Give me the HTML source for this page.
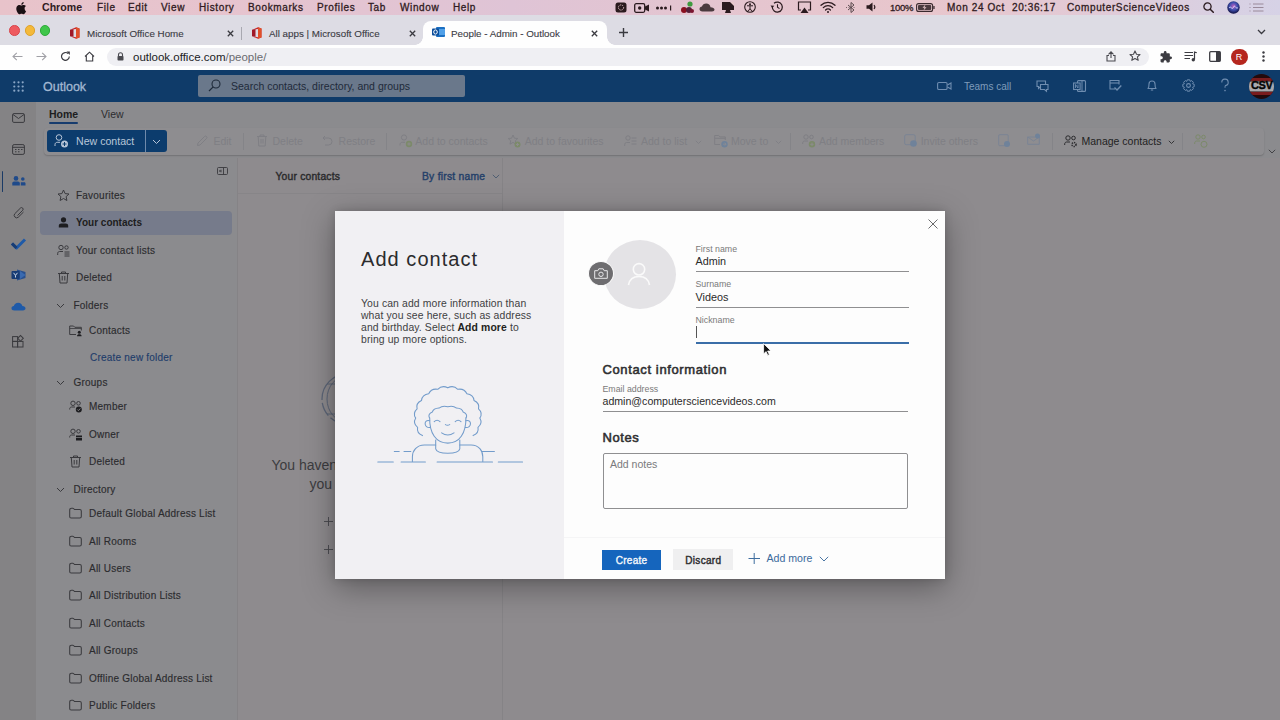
<!DOCTYPE html>
<html><head><meta charset="utf-8">
<style>
*{box-sizing:border-box;margin:0;padding:0}
html,body{width:1280px;height:720px;overflow:hidden;background:#8e8b8e;font-family:"Liberation Sans",sans-serif;}
.a{position:absolute;white-space:nowrap}
svg{position:absolute;overflow:visible}
/* mac menu bar */
#menubar{position:absolute;left:0;top:0;width:1280px;height:16px;background:linear-gradient(90deg,#e8c3ca 0%,#e6c4cf 20%,#dfc4d6 40%,#e4c5d0 55%,#e8c6cc 72%,#e2cad6 85%,#d9d0e2 95%,#d6d2e6 100%);border-bottom:1px solid #b49aa6;}
#menubar .a{top:0.8px;font-size:10px;line-height:13px;color:#301b22;letter-spacing:0.62px;-webkit-text-stroke:0.3px #301b22}
/* tab strip */
#tabs{position:absolute;left:0;top:15px;width:1280px;height:30px;background:#dddce4}
#tabs .t{font-size:9.8px;line-height:12px;color:#3a3a42;top:12.8px;-webkit-text-stroke:0.1px}
#toolbar{position:absolute;left:0;top:45px;width:1280px;height:25px;background:#fefefe}
#omni{position:absolute;left:107px;top:47.8px;width:1042px;height:18.6px;border-radius:10px;background:#efeff3}
/* outlook */
#hdr{position:absolute;left:0;top:70px;width:1280px;height:32px;background:#0f3b69}
#rail{position:absolute;left:0;top:102px;width:36px;height:618px;background:#848385}
#app{position:absolute;left:36px;top:102px;width:1244px;height:618px;background:#8b8b8e}
#listpane{position:absolute;left:237px;top:158px;width:266px;height:562px;background:#8e8b8e;border-left:1px solid #858386;border-right:1px solid #858386}
#right{position:absolute;left:503px;top:158px;width:777px;height:562px;background:#8e8b8e}
.nav{font-size:10px;color:#2b2b2e;line-height:13px;letter-spacing:0.22px;-webkit-text-stroke:0.15px}
/* modal */
#modal{position:absolute;left:335px;top:211px;width:610px;height:368px;background:#fdfdfd;box-shadow:0 8px 30px rgba(0,0,0,0.35),0 0 8px rgba(0,0,0,0.15)}
#mleft{position:absolute;left:0;top:0;width:229px;height:368px;background:#f1f0f3}
.lbl{font-size:8.8px;color:#7a7a7a;line-height:10px}
.val{font-size:10.8px;color:#2b2b2b;line-height:13px}
</style></head>
<body>
<!-- MENU BAR -->
<div id="menubar">
  <div class="a" style="left:42px;top:1.2px;font-weight:bold;font-size:10.6px;letter-spacing:0;-webkit-text-stroke:0">Chrome</div>
  <div class="a" style="left:97px">File</div>
  <div class="a" style="left:128px">Edit</div>
  <div class="a" style="left:161px">View</div>
  <div class="a" style="left:199px">History</div>
  <div class="a" style="left:248px">Bookmarks</div>
  <div class="a" style="left:317px">Profiles</div>
  <div class="a" style="left:368px">Tab</div>
  <div class="a" style="left:400px">Window</div>
  <div class="a" style="left:453px">Help</div>
  <!-- apple -->
  <svg style="left:16px;top:2px" width="11" height="12" viewBox="0 0 11 12"><path d="M8.6 6.4c0-1.5 1.2-2.2 1.3-2.3-.7-1-1.8-1.2-2.2-1.2-.9-.1-1.8.6-2.3.6-.5 0-1.2-.5-2-.5C2.3 3 1.3 3.6.8 4.6c-1.1 1.9-.3 4.7.8 6.2.5.7 1.1 1.6 1.9 1.5.8 0 1-.5 2-.5s1.2.5 2 .5c.8 0 1.3-.8 1.8-1.5.6-.8.8-1.6.8-1.7 0 0-1.5-.6-1.5-2.7zM7.1 1.9C7.5 1.4 7.8.7 7.7 0c-.6 0-1.3.4-1.8.9-.4.4-.7 1.1-.6 1.8.7.1 1.4-.3 1.8-.8z" fill="#1a1014"/></svg>
  <!-- status icons -->
  <svg style="left:615px;top:2px" width="12" height="11"><rect x="0.5" y="0.5" width="11" height="10" rx="2.5" fill="#2a1a1e"/><circle cx="6" cy="5.5" r="2.6" fill="none" stroke="#e8c8cc" stroke-width="1" stroke-dasharray="1.2 1"/></svg>
  <svg style="left:634px;top:3px" width="16" height="10"><rect x="0.7" y="0.7" width="10" height="8.6" rx="1.5" fill="none" stroke="#2a1a1e" stroke-width="1.3"/><circle cx="5.7" cy="5" r="1.7" fill="#2a1a1e"/><path d="M11 3.5L15 1.5V8.5L11 6.5Z" fill="#2a1a1e"/></svg>
  <svg style="left:656px;top:5px" width="17" height="6"><circle cx="1.5" cy="3" r="1.5" fill="#2a1a1e"/><circle cx="5.5" cy="3" r="1.5" fill="#2a1a1e"/><circle cx="9.5" cy="3" r="1.5" fill="#2a1a1e"/><rect x="14" y="0.5" width="1.2" height="5" fill="#2a1a1e"/></svg>
  <svg style="left:680px;top:1px" width="15" height="13"><circle cx="10" cy="3" r="2.6" fill="#3f9a3f"/><circle cx="4" cy="9" r="3" fill="#8a1020"/><circle cx="9" cy="9" r="3" fill="#55203a"/><circle cx="12" cy="10" r="2" fill="#7a1530"/></svg>
  <svg style="left:699px;top:3px" width="16" height="9"><path d="M3.5 8.5C1.5 8.5 0.5 7.3 0.5 6 0.5 4.6 1.6 3.6 3 3.6 3.5 1.7 5 0.5 7.2 0.5 9.6 0.5 11.3 2.2 11.5 4.2 13.7 4.2 15.5 5.3 15.5 6.5 15.5 7.7 14.5 8.5 13 8.5Z" fill="#4a3a3e"/></svg>
  <svg style="left:721px;top:1px" width="14" height="13"><path d="M1 1H13V9H1Z" fill="#2a1a1e"/><path d="M5 9L4 12H10L9 9" fill="#2a1a1e"/><path d="M9 1L13 1 13 5" fill="#e8c8cc"/></svg>
  <svg style="left:744px;top:1px" width="12" height="12"><circle cx="6" cy="6" r="5.3" fill="none" stroke="#2a1a1e" stroke-width="1.1"/><circle cx="6" cy="3.3" r="1" fill="#2a1a1e"/><path d="M3 4.8H9M6 4.8V7.5L4.3 10M6 7.5L7.7 10" stroke="#2a1a1e" stroke-width="1" fill="none"/></svg>
  <svg style="left:770px;top:1px" width="14" height="12"><path d="M2.3 6A5 5 0 1 0 4 2.3" fill="none" stroke="#2a1a1e" stroke-width="1.2"/><path d="M0.5 4.5L2.3 7 4.3 4.8" fill="#2a1a1e"/><path d="M7.5 3.2V6.3L9.5 7.6" stroke="#2a1a1e" stroke-width="1.1" fill="none"/></svg>
  <svg style="left:797px;top:1px" width="15" height="12"><path d="M4 9H1.5V1H13.5V9H11" fill="none" stroke="#2a1a1e" stroke-width="1.2"/><path d="M3.5 12L7.5 6.5 11.5 12Z" fill="#2a1a1e"/></svg>
  <svg style="left:820px;top:1px" width="16" height="12"><path d="M1 4.2A10 10 0 0 1 15 4.2M3.3 6.6A6.6 6.6 0 0 1 12.7 6.6M5.6 9A3.3 3.3 0 0 1 10.4 9" fill="none" stroke="#2a1a1e" stroke-width="1.3" stroke-linecap="round"/><circle cx="8" cy="11" r="1" fill="#2a1a1e"/></svg>
  <svg style="left:846px;top:2px" width="10" height="11"><path d="M2 3L8 8 5 10.5V0.5L8 3 2 8" fill="none" stroke="#5a4a4e" stroke-width="1"/><path d="M0 5.5H10" stroke="#5a4a4e" stroke-width="0.8" stroke-dasharray="1 1.5"/></svg>
  <svg style="left:866px;top:2px" width="11" height="10"><path d="M0.5 3.3H3L6.5 0.5V9.5L3 6.7H0.5Z" fill="#2a1a1e"/><path d="M8 3A3 3 0 0 1 8 7" fill="none" stroke="#2a1a1e" stroke-width="1.1"/></svg>
  <div class="a" style="left:890px;font-size:9.5px;letter-spacing:-0.3px">100%</div>
  <svg style="left:916px;top:3px" width="19" height="9"><rect x="0.6" y="0.6" width="16" height="7.8" rx="2" fill="none" stroke="#3a2a2e" stroke-width="1.1"/><rect x="2" y="2" width="13.2" height="5" rx="1" fill="#4a3a3e"/><path d="M9.5 1.5L6.5 4.8H8.5L7.5 7.5 10.5 4.2H8.5Z" fill="#e8c8cc"/><rect x="17.3" y="3" width="1.3" height="3" fill="#3a2a2e"/></svg>
  <div class="a" style="left:947px">Mon 24 Oct</div>
  <div class="a" style="left:1012px">20:36:17</div>
  <div class="a" style="left:1067px">ComputerScienceVideos</div>
  <svg style="left:1203px;top:2px" width="11" height="11"><circle cx="4.5" cy="4.5" r="3.6" fill="none" stroke="#2a1a1e" stroke-width="1.3"/><path d="M7.2 7.2L10.3 10.3" stroke="#2a1a1e" stroke-width="1.5" stroke-linecap="round"/></svg>
  <svg style="left:1227px;top:1px" width="13" height="13"><defs><radialGradient id="sg" cx="50%" cy="40%" r="60%"><stop offset="0" stop-color="#c060c0"/><stop offset="0.5" stop-color="#4050b0"/><stop offset="1" stop-color="#101040"/></radialGradient></defs><circle cx="6.5" cy="6.5" r="6.2" fill="url(#sg)"/><path d="M2 7C4 4 5 10 6.5 6 8 3 9 9 11 6.5" stroke="#e0e0ff" stroke-width="0.9" fill="none"/></svg>
  <svg style="left:1249px;top:3px" width="15" height="9"><g stroke="#9a8a9a" stroke-width="1"><path d="M0.5 1H1.5M4 1H14.5M0.5 4.5H1.5M4 4.5H14.5M0.5 8H1.5M4 8H14.5"/></g></svg>
</div>
<!-- TABS -->
<div id="tabs">
  <div class="t a" style="left:87px">Microsoft Office Home</div>
  <div class="t a" style="left:269px">All apps | Microsoft Office</div>
  <div style="position:absolute;left:423px;top:6px;width:184px;height:24px;background:#fefefe;border-radius:8px 8px 0 0"></div>
  <div style="position:absolute;left:415px;top:22px;width:8px;height:8px;background:radial-gradient(circle at 0 0,transparent 7.5px,#fefefe 8px)"></div>
  <div style="position:absolute;left:607px;top:22px;width:8px;height:8px;background:radial-gradient(circle at 100% 0,transparent 7.5px,#fefefe 8px)"></div>
  <div class="t a" style="left:451px">People - Admin - Outlook</div>
</div>
<!-- traffic lights -->
<div style="position:absolute;left:9px;top:25px;width:10.5px;height:10.5px;border-radius:50%;background:#ee5a5f;border:0.5px solid #d8474d"></div>
<div style="position:absolute;left:24.5px;top:25px;width:10.5px;height:10.5px;border-radius:50%;background:#f4b93a;border:0.5px solid #dea22c"></div>
<div style="position:absolute;left:39.5px;top:25px;width:10.5px;height:10.5px;border-radius:50%;background:#3fc64a;border:0.5px solid #2fab3a"></div>
<!-- office icons -->
<svg style="left:69px;top:27px" width="11" height="12" viewBox="0 0 11 12"><path d="M1 2.8L7 0.3 10.5 1.5V10.5L7 11.7 1 9.3 7 10.2V2Z" fill="#c8282c"/><path d="M1 2.8L4.5 2V9.8L1 9.3Z" fill="#a01828"/><path d="M7 0.3L10.5 1.5V10.5L7 11.7Z" fill="#e0502a"/></svg>
<svg style="left:251px;top:27px" width="11" height="12" viewBox="0 0 11 12"><path d="M1 2.8L7 0.3 10.5 1.5V10.5L7 11.7 1 9.3 7 10.2V2Z" fill="#c8282c"/><path d="M1 2.8L4.5 2V9.8L1 9.3Z" fill="#a01828"/><path d="M7 0.3L10.5 1.5V10.5L7 11.7Z" fill="#e0502a"/></svg>
<!-- outlook icon -->
<svg style="left:432px;top:26px" width="13" height="12" viewBox="0 0 13 12"><rect x="4" y="1" width="9" height="10" rx="1" fill="#1b6fc2"/><rect x="6" y="3" width="7" height="6" fill="#50a0e8"/><rect x="0" y="2.5" width="7" height="7" rx="1" fill="#0a4c9a"/><ellipse cx="3.5" cy="6" rx="1.8" ry="2.1" fill="none" stroke="#fff" stroke-width="1"/></svg>
<!-- tab close x -->
<svg style="left:227px;top:30px" width="7" height="7"><path d="M0.8 0.8L6.2 6.2M6.2 0.8L0.8 6.2" stroke="#3a3a40" stroke-width="1.3"/></svg>
<svg style="left:409px;top:30px" width="7" height="7"><path d="M0.8 0.8L6.2 6.2M6.2 0.8L0.8 6.2" stroke="#3a3a40" stroke-width="1.3"/></svg>
<svg style="left:591px;top:30px" width="7" height="7"><path d="M0.8 0.8L6.2 6.2M6.2 0.8L0.8 6.2" stroke="#3a3a40" stroke-width="1.3"/></svg>
<div style="position:absolute;left:241px;top:27px;width:1px;height:13px;background:#a8a8b0"></div>
<svg style="left:619px;top:28px" width="9" height="9"><path d="M4.5 0V9M0 4.5H9" stroke="#3a3a40" stroke-width="1.4"/></svg>
<svg style="left:1257px;top:29px" width="9" height="6"><path d="M1 1L4.5 4.5 8 1" stroke="#3a3a40" stroke-width="1.3" fill="none"/></svg>
<div id="toolbar"></div>
<div id="omni"></div>
<!-- nav buttons -->
<svg style="left:12px;top:52px" width="11" height="9"><path d="M10.5 4.5H1M4.8 0.8L1 4.5 4.8 8.2" stroke="#a0a0a6" stroke-width="1.1" fill="none"/></svg>
<svg style="left:36px;top:52px" width="11" height="9"><path d="M0.5 4.5H10M6.2 0.8L10 4.5 6.2 8.2" stroke="#a0a0a6" stroke-width="1.1" fill="none"/></svg>
<svg style="left:60px;top:51px" width="11" height="11"><path d="M9.3 5.5A3.9 3.9 0 1 1 8.2 2.7" stroke="#3c3c42" stroke-width="1.2" fill="none"/><path d="M6.5 0.6H9.8V3.9Z" fill="#3c3c42"/></svg>
<svg style="left:84px;top:51px" width="11" height="11"><path d="M1 5.5L5.5 1.2 10 5.5M2.3 4.3V10H8.7V4.3" stroke="#3c3c42" stroke-width="1.1" fill="none"/></svg>
<svg style="left:117px;top:52px" width="7" height="9"><path d="M1.5 4V2.8A2 2 0 0 1 5.5 2.8V4" stroke="#4a4a50" stroke-width="1.1" fill="none"/><rect x="0.5" y="4" width="6" height="4.6" rx="0.8" fill="#4a4a50"/></svg>
<!-- right toolbar icons -->
<svg style="left:1106px;top:51px" width="10" height="11"><path d="M5 1V7M2.5 3.3L5 0.8 7.5 3.3M3 4.5H1V10H9V4.5H7" stroke="#4a4a50" stroke-width="1.1" fill="none"/></svg>
<svg style="left:1129px;top:50px" width="12" height="12"><path d="M6 0.9L7.5 4.2 11 4.5 8.4 6.8 9.2 10.3 6 8.5 2.8 10.3 3.6 6.8 1 4.5 4.5 4.2Z" stroke="#4a4a50" stroke-width="1.1" fill="none" stroke-linejoin="round"/></svg>
<svg style="left:1160px;top:50.5px" width="12" height="12" viewBox="1 1 22 22"><path d="M20.5 11H19V7c0-1.1-.9-2-2-2h-4V3.5C13 2.120 11.88 1 10.5 1S8 2.12 8 3.5V5H4c-1.1 0-1.99.9-1.99 2v3.8H3.5c1.49 0 2.7 1.21 2.7 2.7s-1.21 2.7-2.7 2.7H2V20c0 1.1.9 2 2 2h3.8v-1.5c0-1.49 1.21-2.700 2.7-2.7 1.49 0 2.7 1.21 2.7 2.7V22H17c1.1 0 2-.9 2-2v-4h1.5c1.38 0 2.5-1.12 2.5-2.5S21.88 11 20.5 11z" fill="#3c3c42"/></svg>
<svg style="left:1184px;top:51px" width="13" height="11"><path d="M0.5 1.5H9M0.5 4.5H9M0.5 7.5H6" stroke="#3c3c42" stroke-width="1.2"/><path d="M10.5 8.5V1L12.8 1.8" stroke="#3c3c42" stroke-width="1.2" fill="none"/><circle cx="9.3" cy="8.8" r="1.7" fill="#3c3c42"/></svg>
<svg style="left:1209px;top:51px" width="12" height="11"><rect x="0.7" y="0.7" width="10.6" height="9.6" rx="1" fill="none" stroke="#3c3c42" stroke-width="1.3"/><rect x="7" y="0.7" width="4.3" height="9.6" fill="#3c3c42"/></svg>
<div style="position:absolute;left:1231px;top:48.5px;width:16.5px;height:16.5px;border-radius:50%;background:#b5261e"></div>
<div class="a" style="left:1234.5px;top:51.5px;font-size:9px;line-height:11px;color:#fff;width:9px;text-align:center">R</div>
<svg style="left:1262px;top:51px" width="3" height="11"><circle cx="1.5" cy="1.5" r="1.2" fill="#3c3c42"/><circle cx="1.5" cy="5.5" r="1.2" fill="#3c3c42"/><circle cx="1.5" cy="9.5" r="1.2" fill="#3c3c42"/></svg>
<div class="a" style="left:133px;top:50px;font-size:11.5px;line-height:14px;color:#202124">outlook.office.com<span style="color:#6b6b70">/people/</span></div>

<!-- OUTLOOK HEADER -->
<div id="hdr">
  <div class="a" style="left:43px;top:10px;font-size:12.5px;line-height:15px;color:#a3b8d2;-webkit-text-stroke:0.3px #a3b8d2">Outlook</div>
  <div style="position:absolute;left:198px;top:5px;width:267px;height:22px;background:#6a788b;border-radius:2px"></div>
  <div class="a" style="left:231px;top:10px;font-size:10.5px;line-height:13px;color:#1e2a3a">Search contacts, directory, and groups</div>
  <div class="a" style="left:964px;top:10px;font-size:10px;line-height:13px;color:#7f9bbb">Teams call</div>
  <!-- waffle -->
  <svg style="left:13px;top:11px" width="11" height="11"><g fill="#8aa6c6"><circle cx="1.3" cy="1.3" r="1.1"/><circle cx="5.5" cy="1.3" r="1.1"/><circle cx="9.7" cy="1.3" r="1.1"/><circle cx="1.3" cy="5.5" r="1.1"/><circle cx="5.5" cy="5.5" r="1.1"/><circle cx="9.7" cy="5.5" r="1.1"/><circle cx="1.3" cy="9.7" r="1.1"/><circle cx="5.5" cy="9.7" r="1.1"/><circle cx="9.7" cy="9.7" r="1.1"/></g></svg>
  <!-- search icon -->
  <svg style="left:208px;top:9px" width="13" height="13"><circle cx="8" cy="5" r="4" fill="none" stroke="#1e2a3a" stroke-width="1.1"/><path d="M5.2 7.8L1 12" stroke="#1e2a3a" stroke-width="1.2"/></svg>
  <!-- header right icons -->
  <svg style="left:937px;top:11px" width="15" height="10"><rect x="0.6" y="1.5" width="9.5" height="7" rx="1.3" fill="none" stroke="#6f8db0" stroke-width="1.1"/><path d="M10.5 4L14 2V8L10.5 6" fill="none" stroke="#6f8db0" stroke-width="1.1"/></svg>
  <svg style="left:1036px;top:10px" width="13" height="12"><path d="M1 1H9.5V6.5H4.5L2.5 8.5V6.5H1Z" fill="none" stroke="#6f8db0" stroke-width="1.1"/><path d="M4.5 4.5H12V9.5H10.5V11.3L8.5 9.5H4.5Z" fill="#0f3b69" stroke="#6f8db0" stroke-width="1.1"/></svg>
  <svg style="left:1073px;top:10px" width="13" height="12"><rect x="4.5" y="0.6" width="8" height="10.8" rx="1" fill="none" stroke="#6f8db0" stroke-width="1.1"/><path d="M9 1V11" stroke="#6f8db0" stroke-width="1"/><rect x="0.6" y="3" width="6.5" height="6.5" fill="#0f3b69" stroke="#6f8db0" stroke-width="1.1"/><path d="M2.5 8V4.5L5 8V4.5" stroke="#6f8db0" stroke-width="0.9" fill="none"/></svg>
  <svg style="left:1109px;top:9px" width="13" height="13"><path d="M6 10H1V1.5H10V5.5" fill="none" stroke="#6f8db0" stroke-width="1.1"/><path d="M1 4H10" stroke="#6f8db0" stroke-width="1.1"/><path d="M5.5 8.5L8 11 12.3 6.5" fill="none" stroke="#6f8db0" stroke-width="1.4"/></svg>
  <svg style="left:1147px;top:9px" width="10" height="13"><path d="M1 9.5C2 8.5 2 7.5 2 5A3 3 0 0 1 8 5C8 7.5 8 8.5 9 9.5Z" fill="none" stroke="#6f8db0" stroke-width="1.1" stroke-linejoin="round"/><path d="M3.8 11H6.2" stroke="#6f8db0" stroke-width="1.1"/></svg>
  <svg style="left:1182px;top:9px" width="13" height="13"><circle cx="6.5" cy="6.5" r="1.9" fill="none" stroke="#6f8db0" stroke-width="1.1"/><path d="M5.3 0.8H7.7L8.2 2.4 9.7 1.6 11.4 3.3 10.6 4.8 12.2 5.3V7.7L10.6 8.2 11.4 9.7 9.7 11.4 8.2 10.6 7.7 12.2H5.3L4.8 10.6 3.3 11.4 1.6 9.7 2.4 8.2 0.8 7.7V5.3L2.4 4.8 1.6 3.3 3.3 1.6 4.8 2.4Z" fill="none" stroke="#6f8db0" stroke-width="1" stroke-linejoin="round"/></svg>
  <svg style="left:1221px;top:9px" width="8" height="13"><path d="M0.8 3.5A3.2 3.2 0 1 1 4.5 6.5C4 6.8 4 7.5 4 8.8" fill="none" stroke="#6f8db0" stroke-width="1.1"/><circle cx="4" cy="11.6" r="0.8" fill="#6f8db0"/></svg>
  <!-- CSV avatar -->
  <svg style="left:1249px;top:4px" width="25" height="25" viewBox="0 0 25 25"><defs><clipPath id="cc"><circle cx="12.5" cy="12.5" r="12.5"/></clipPath></defs><g clip-path="url(#cc)"><rect width="25" height="25" fill="#240a0c"/><rect y="4" width="25" height="3" fill="#7a1c1e"/><rect y="7.5" width="25" height="10" fill="#a9a8ac"/><rect y="18" width="25" height="3" fill="#7a1c1e"/></g></svg>
  <div class="a" style="left:1251px;top:9px;font-size:11px;line-height:13px;font-weight:bold;color:#050505;letter-spacing:-0.4px;-webkit-text-stroke:0.4px #050505">CSV</div>
</div>
<div id="rail"></div>
<div id="app"></div>
<div id="listpane"></div>
<div id="right"></div>
<!-- RIBBON -->
<div style="position:absolute;left:44px;top:128px;width:1220px;height:27px;border-radius:4px;background:#8e8d90;box-shadow:0 1px 1.5px rgba(0,0,0,0.18)"></div>
<div class="a" style="left:49px;top:108px;font-size:10.5px;line-height:13px;font-weight:bold;color:#1d1d20">Home</div>
<div style="position:absolute;left:49px;top:122px;width:29px;height:2px;background:#173c6e;border-radius:1px"></div>
<div class="a" style="left:101px;top:108px;font-size:10.5px;line-height:13px;color:#2b2b2e">View</div>
<div style="position:absolute;left:47px;top:130px;width:120px;height:22px;background:#0c3c6d;border-radius:3px"></div>
<div style="position:absolute;left:145px;top:130px;width:1px;height:22px;background:#6f8aab"></div>
<svg style="left:54px;top:134px" width="15" height="14"><circle cx="5" cy="3.5" r="2.8" fill="none" stroke="#b8c6d8" stroke-width="1"/><path d="M1 12V10.5C1 9.3 2 8.3 3.2 8.3H6" fill="none" stroke="#b8c6d8" stroke-width="1"/><circle cx="10.5" cy="10" r="3.5" fill="#b8c6d8"/><path d="M10.5 8V12M8.5 10H12.5" stroke="#0c3c6d" stroke-width="1"/></svg>
<div class="a" style="left:76px;top:135px;font-size:10.6px;line-height:13px;color:#b8c6d8">New contact</div>
<svg style="left:152px;top:139px" width="9" height="6"><path d="M1 1L4.5 4.5 8 1" fill="none" stroke="#b8c6d8" stroke-width="1"/></svg>
<svg style="left:196px;top:135px" width="12" height="12"><path d="M1.5 10.5L2 8 8.5 1.5A1.4 1.4 0 0 1 10.5 3.5L4 10Z" fill="none" stroke="#7f7f84" stroke-width="1"/></svg>
<div class="a" style="left:213.4px;top:135px;font-size:10.5px;line-height:13px;color:#7f7f84">Edit</div>
<div style="position:absolute;left:243px;top:133px;width:1px;height:17px;background:#848488"></div>
<svg style="left:256px;top:134px" width="12" height="13"><path d="M1 2.5H11M4 2.5V1H8V2.5M2.2 2.5L2.8 12H9.2L9.8 2.5M5 5V9.5M7 5V9.5" fill="none" stroke="#7f7f84" stroke-width="1"/></svg>
<div class="a" style="left:272.5px;top:135px;font-size:10.5px;line-height:13px;color:#7f7f84">Delete</div>
<svg style="left:322px;top:135px" width="11" height="11"><path d="M3 1L1 3 3 5M1 3H6.5A3.5 3.5 0 0 1 6.5 10H3" fill="none" stroke="#7f7f84" stroke-width="1"/></svg>
<div class="a" style="left:338.6px;top:135px;font-size:10.5px;line-height:13px;color:#7f7f84">Restore</div>
<div style="position:absolute;left:385.5px;top:133px;width:1px;height:17px;background:#848488"></div>
<svg style="left:398.5px;top:134px" width="14" height="14"><circle cx="5" cy="3.5" r="2.6" fill="none" stroke="#7f7f84" stroke-width="1"/><path d="M1 11.5V10.5C1 9.3 2 8.3 3.2 8.3H6" fill="none" stroke="#7f7f84" stroke-width="1"/><circle cx="10" cy="10" r="3.2" fill="#7c8a6a"/><path d="M10 8.3V11.7M8.3 10H11.7" stroke="#8e8d90" stroke-width="0.9"/></svg>
<div class="a" style="left:415.3px;top:135px;font-size:10.5px;line-height:13px;color:#7f7f84">Add to contacts</div>
<svg style="left:507px;top:134px" width="14" height="14"><path d="M6 1L7.4 4.2 10.8 4.5 8.3 6.8 9 10.2 6 8.4 3 10.2 3.7 6.8 1.2 4.5 4.6 4.2Z" fill="none" stroke="#7f7f84" stroke-width="1" stroke-linejoin="round"/><circle cx="10.5" cy="10.5" r="3" fill="#7c8a6a"/><path d="M10.5 9V12M9 10.5H12" stroke="#8e8d90" stroke-width="0.9"/></svg>
<div class="a" style="left:524.7px;top:135px;font-size:10.5px;line-height:13px;color:#7f7f84">Add to favourites</div>
<svg style="left:623.7px;top:135px" width="13" height="12"><circle cx="4" cy="3" r="2.2" fill="none" stroke="#7f7f84" stroke-width="1"/><path d="M0.7 11V9.5C0.7 8.5 1.5 7.5 2.5 7.5H6" fill="none" stroke="#7f7f84" stroke-width="1"/><path d="M7.5 3H12.5M7.5 6H12.5M7.5 9H12.5" stroke="#7f7f84" stroke-width="1"/></svg>
<div class="a" style="left:641px;top:135px;font-size:10.5px;line-height:13px;color:#7f7f84">Add to list</div>
<svg style="left:695px;top:140px" width="7" height="5"><path d="M0.8 0.8L3.5 3.5 6.2 0.8" fill="none" stroke="#7f7f84" stroke-width="0.9"/></svg>
<svg style="left:713.7px;top:134px" width="14" height="14"><path d="M0.7 1.5H4.6L6 2.9H11.3V6M0.7 1.5V10.5H6M0.7 4.3H11.3" fill="none" stroke="#7f7f84" stroke-width="1"/><circle cx="10.5" cy="10.2" r="3.2" fill="#6f829a"/><path d="M9 10.2H12M10.8 8.8L12 10.2 10.8 11.6" fill="none" stroke="#8e8d90" stroke-width="0.8"/></svg>
<div class="a" style="left:731px;top:135px;font-size:10.5px;line-height:13px;color:#7f7f84">Move to</div>
<svg style="left:775px;top:140px" width="7" height="5"><path d="M0.8 0.8L3.5 3.5 6.2 0.8" fill="none" stroke="#7f7f84" stroke-width="0.9"/></svg>
<div style="position:absolute;left:789.6px;top:133px;width:1px;height:17px;background:#848488"></div>
<svg style="left:802px;top:134px" width="14" height="14"><circle cx="4" cy="3" r="2.2" fill="none" stroke="#7f7f84" stroke-width="1"/><circle cx="9.5" cy="3" r="1.8" fill="none" stroke="#7f7f84" stroke-width="1"/><path d="M0.7 10V9C0.7 8 1.5 7 2.5 7H6" fill="none" stroke="#7f7f84" stroke-width="1"/><circle cx="10" cy="10.3" r="3.2" fill="#7c8a6a"/><path d="M10 8.6V12M8.3 10.3H11.7" stroke="#8e8d90" stroke-width="0.9"/></svg>
<div class="a" style="left:819px;top:135px;font-size:10.5px;line-height:13px;color:#7f7f84">Add members</div>
<svg style="left:904px;top:134px" width="14" height="14"><rect x="0.7" y="0.7" width="10.5" height="10" rx="1.5" fill="none" stroke="#7a8494" stroke-width="1"/><circle cx="9.5" cy="9.5" r="3.3" fill="#6f829a"/></svg>
<div class="a" style="left:920.7px;top:135px;font-size:10.5px;line-height:13px;color:#7f7f84">Invite others</div>
<svg style="left:998px;top:134px" width="13" height="14"><rect x="0.7" y="0.7" width="9.5" height="11" rx="1" fill="none" stroke="#7a8494" stroke-width="1"/><circle cx="9" cy="10" r="3" fill="#6f829a"/></svg>
<svg style="left:1027px;top:133px" width="14" height="13"><path d="M0.7 4V11.3H12.3V4M0.7 4L6.5 8 12.3 4M0.7 4H8" fill="none" stroke="#7a8494" stroke-width="1"/><circle cx="10.5" cy="3" r="2.5" fill="#6f829a"/></svg>
<div style="position:absolute;left:1052px;top:133px;width:1px;height:17px;background:#848488"></div>
<svg style="left:1064px;top:135px" width="13" height="12"><circle cx="4" cy="3" r="2.2" fill="none" stroke="#2b2b2e" stroke-width="1"/><circle cx="9.5" cy="3" r="1.8" fill="none" stroke="#2b2b2e" stroke-width="1"/><path d="M0.7 10V9C0.7 8 1.5 7 2.5 7H6" fill="none" stroke="#2b2b2e" stroke-width="1"/><circle cx="10" cy="9.5" r="2" fill="none" stroke="#2b2b2e" stroke-width="1.6" stroke-dasharray="1.2 0.9"/></svg>
<div class="a" style="left:1081.5px;top:135px;font-size:10.5px;line-height:13px;color:#1f1f22">Manage contacts</div>
<svg style="left:1168px;top:140px" width="7" height="5"><path d="M0.8 0.8L3.5 3.5 6.2 0.8" fill="none" stroke="#2b2b2e" stroke-width="0.9"/></svg>
<div style="position:absolute;left:1181.5px;top:133px;width:1px;height:17px;background:#848488"></div>
<svg style="left:1194px;top:134px" width="14" height="14"><circle cx="4" cy="3" r="2.2" fill="none" stroke="#7c8a6a" stroke-width="1"/><circle cx="9.5" cy="3" r="1.8" fill="none" stroke="#7c8a6a" stroke-width="1"/><path d="M0.7 10V9C0.7 8 1.5 7 2.5 7H6" fill="none" stroke="#7c8a6a" stroke-width="1"/><circle cx="10" cy="10.3" r="3" fill="none" stroke="#7c8a6a" stroke-width="1"/></svg>
<svg style="left:1268px;top:149px" width="8" height="5"><path d="M0.8 0.8L4 4 7.2 0.8" fill="none" stroke="#3a3a3e" stroke-width="0.9"/></svg>
<!-- NAV -->
<div style="position:absolute;left:40px;top:210.5px;width:192px;height:24px;background:#767b8b;border-radius:4px"></div>
<svg style="left:57px;top:189.0px" width="13" height="13"><path d="M6.5 1L8.1 4.6 12 5 9.1 7.6 9.9 11.5 6.5 9.5 3.1 11.5 3.9 7.6 1 5 4.9 4.6Z" fill="none" stroke="#3a3a3e" stroke-width="1" stroke-linejoin="round"/></svg>
<div class="a nav" style="left:76px;top:189.0px">Favourites</div>
<svg style="left:57px;top:216.0px" width="13" height="13"><circle cx="6.5" cy="3.8" r="2.6" fill="#1d1d20"/><path d="M1.8 11.5V9.8C1.8 8.4 3 7.6 4.2 7.6H8.8C10 7.6 11.2 8.4 11.2 9.8V11.5Z" fill="#1d1d20"/></svg>
<div class="a nav" style="left:76px;top:216.0px;font-weight:bold;color:#1d1d20;letter-spacing:0;-webkit-text-stroke:0">Your contacts</div>
<svg style="left:57px;top:243.5px" width="13" height="13"><circle cx="4" cy="3.5" r="2.2" fill="none" stroke="#3a3a3e" stroke-width="1"/><path d="M0.7 11V9.3C0.7 8.3 1.5 7.5 2.5 7.5H6" fill="none" stroke="#3a3a3e" stroke-width="1"/><circle cx="9.5" cy="3.5" r="1.7" fill="none" stroke="#3a3a3e" stroke-width="1"/><path d="M7.5 8H12.5M7.5 10H12.5M7.5 12H12.5" stroke="#3a3a3e" stroke-width="1"/></svg>
<div class="a nav" style="left:76px;top:243.5px">Your contact lists</div>
<svg style="left:57px;top:270.8px" width="13" height="13"><path d="M1 2.5H12M4.5 2.5V1H8.5V2.5M2.3 2.5L3 12H10L10.7 2.5M5.2 5V9.5M7.8 5V9.5" fill="none" stroke="#3a3a3e" stroke-width="1"/></svg>
<div class="a nav" style="left:76px;top:270.8px">Deleted</div>
<svg style="left:56px;top:302.8px" width="9" height="6"><path d="M1 1L4.5 4.5 8 1" fill="none" stroke="#3a3a3e" stroke-width="1"/></svg>
<div class="a nav" style="left:73.5px;top:298.8px">Folders</div>
<svg style="left:69px;top:323.5px" width="13" height="13"><path d="M0.7 2V10.5H7M0.7 2H4.5L5.8 3.3H12.3V6.5" fill="none" stroke="#3a3a3e" stroke-width="1"/><path d="M0.7 4.5H12.3" stroke="#3a3a3e" stroke-width="0.8"/><circle cx="10.3" cy="8.3" r="1.5" fill="#1d1d20"/><path d="M8 12.3C8 10.8 9 10.3 10.3 10.3S12.6 10.8 12.6 12.3Z" fill="#1d1d20"/></svg>
<div class="a nav" style="left:89px;top:323.5px">Contacts</div>
<div class="a nav" style="left:90px;top:350.8px;color:#1f3d6b">Create new folder</div>
<svg style="left:56px;top:379.8px" width="9" height="6"><path d="M1 1L4.5 4.5 8 1" fill="none" stroke="#3a3a3e" stroke-width="1"/></svg>
<div class="a nav" style="left:73.5px;top:375.8px">Groups</div>
<svg style="left:69px;top:400.1px" width="13" height="13"><circle cx="4" cy="3.3" r="2.2" fill="none" stroke="#3a3a3e" stroke-width="1"/><circle cx="9.5" cy="3.3" r="1.8" fill="none" stroke="#3a3a3e" stroke-width="1"/><path d="M0.7 9.5V8.8C0.7 7.8 1.5 7 2.5 7H6" fill="none" stroke="#3a3a3e" stroke-width="1"/><circle cx="9.8" cy="9.5" r="3" fill="#1d1d20"/><path d="M8.3 9.5L9.4 10.6 11.3 8.5" fill="none" stroke="#8b8b8e" stroke-width="0.9"/></svg>
<div class="a nav" style="left:89px;top:400.1px">Member</div>
<svg style="left:69px;top:427.5px" width="13" height="13"><circle cx="4" cy="3.3" r="2.2" fill="none" stroke="#3a3a3e" stroke-width="1"/><circle cx="9.5" cy="3.3" r="1.8" fill="none" stroke="#3a3a3e" stroke-width="1"/><path d="M0.7 9.5V8.8C0.7 7.8 1.5 7 2.5 7H6" fill="none" stroke="#3a3a3e" stroke-width="1"/><rect x="7" y="7.5" width="6" height="5" fill="#1d1d20"/><path d="M7 9.5H13" stroke="#8b8b8e" stroke-width="0.7"/></svg>
<div class="a nav" style="left:89px;top:427.5px">Owner</div>
<svg style="left:69px;top:455.0px" width="13" height="13"><path d="M1 2.5H12M4.5 2.5V1H8.5V2.5M2.3 2.5L3 12H10L10.7 2.5M5.2 5V9.5M7.8 5V9.5" fill="none" stroke="#3a3a3e" stroke-width="1"/></svg>
<div class="a nav" style="left:89px;top:455.0px">Deleted</div>
<svg style="left:56px;top:486.8px" width="9" height="6"><path d="M1 1L4.5 4.5 8 1" fill="none" stroke="#3a3a3e" stroke-width="1"/></svg>
<div class="a nav" style="left:73.5px;top:482.8px">Directory</div>
<svg style="left:69px;top:506.9px" width="13" height="13"><path d="M0.7 3.2Q0.7 1.2 2.6 1.2H3.8Q4.8 1.2 5.3 2.4H10.8Q12.3 2.4 12.3 3.9V9.6Q12.3 11 10.8 11H2.2Q0.7 11 0.7 9.6Z" fill="none" stroke="#3a3a3e" stroke-width="1.05" stroke-linejoin="round"/></svg>
<div class="a nav" style="left:89px;top:506.9px">Default Global Address List</div>
<svg style="left:69px;top:534.8px" width="13" height="13"><path d="M0.7 3.2Q0.7 1.2 2.6 1.2H3.8Q4.8 1.2 5.3 2.4H10.8Q12.3 2.4 12.3 3.9V9.6Q12.3 11 10.8 11H2.2Q0.7 11 0.7 9.6Z" fill="none" stroke="#3a3a3e" stroke-width="1.05" stroke-linejoin="round"/></svg>
<div class="a nav" style="left:89px;top:534.8px">All Rooms</div>
<svg style="left:69px;top:562.1px" width="13" height="13"><path d="M0.7 3.2Q0.7 1.2 2.6 1.2H3.8Q4.8 1.2 5.3 2.4H10.8Q12.3 2.4 12.3 3.9V9.6Q12.3 11 10.8 11H2.2Q0.7 11 0.7 9.6Z" fill="none" stroke="#3a3a3e" stroke-width="1.05" stroke-linejoin="round"/></svg>
<div class="a nav" style="left:89px;top:562.1px">All Users</div>
<svg style="left:69px;top:589.2px" width="13" height="13"><path d="M0.7 3.2Q0.7 1.2 2.6 1.2H3.8Q4.8 1.2 5.3 2.4H10.8Q12.3 2.4 12.3 3.9V9.6Q12.3 11 10.8 11H2.2Q0.7 11 0.7 9.6Z" fill="none" stroke="#3a3a3e" stroke-width="1.05" stroke-linejoin="round"/></svg>
<div class="a nav" style="left:89px;top:589.2px">All Distribution Lists</div>
<svg style="left:69px;top:617.1px" width="13" height="13"><path d="M0.7 3.2Q0.7 1.2 2.6 1.2H3.8Q4.8 1.2 5.3 2.4H10.8Q12.3 2.4 12.3 3.9V9.6Q12.3 11 10.8 11H2.2Q0.7 11 0.7 9.6Z" fill="none" stroke="#3a3a3e" stroke-width="1.05" stroke-linejoin="round"/></svg>
<div class="a nav" style="left:89px;top:617.1px">All Contacts</div>
<svg style="left:69px;top:644.4px" width="13" height="13"><path d="M0.7 3.2Q0.7 1.2 2.6 1.2H3.8Q4.8 1.2 5.3 2.4H10.8Q12.3 2.4 12.3 3.9V9.6Q12.3 11 10.8 11H2.2Q0.7 11 0.7 9.6Z" fill="none" stroke="#3a3a3e" stroke-width="1.05" stroke-linejoin="round"/></svg>
<div class="a nav" style="left:89px;top:644.4px">All Groups</div>
<svg style="left:69px;top:671.9px" width="13" height="13"><path d="M0.7 3.2Q0.7 1.2 2.6 1.2H3.8Q4.8 1.2 5.3 2.4H10.8Q12.3 2.4 12.3 3.9V9.6Q12.3 11 10.8 11H2.2Q0.7 11 0.7 9.6Z" fill="none" stroke="#3a3a3e" stroke-width="1.05" stroke-linejoin="round"/></svg>
<div class="a nav" style="left:89px;top:671.9px">Offline Global Address List</div>
<svg style="left:69px;top:699.1px" width="13" height="13"><path d="M0.7 3.2Q0.7 1.2 2.6 1.2H3.8Q4.8 1.2 5.3 2.4H10.8Q12.3 2.4 12.3 3.9V9.6Q12.3 11 10.8 11H2.2Q0.7 11 0.7 9.6Z" fill="none" stroke="#3a3a3e" stroke-width="1.05" stroke-linejoin="round"/></svg>
<div class="a nav" style="left:89px;top:699.1px">Public Folders</div>
<!-- RAIL -->
<div style="position:absolute;left:1.5px;top:171px;width:1.5px;height:21px;background:#1a3a66;border-radius:1px"></div>
<svg style="left:12px;top:113px" width="13" height="10"><rect x="0.6" y="0.6" width="11.8" height="8.8" rx="1.2" fill="none" stroke="#3a3a3e" stroke-width="1"/><path d="M1 1.5L6.5 5.5 12 1.5" fill="none" stroke="#3a3a3e" stroke-width="1"/></svg>
<svg style="left:12px;top:144px" width="13" height="11"><rect x="0.6" y="0.6" width="11.8" height="9.8" rx="1.5" fill="none" stroke="#3a3a3e" stroke-width="1"/><path d="M0.6 3.3H12.4" stroke="#3a3a3e" stroke-width="1"/><path d="M3 5.5H4.5M6 5.5H7.5M9 5.5H10.5M3 7.8H4.5M6 7.8H7.5" stroke="#3a3a3e" stroke-width="1"/></svg>
<svg style="left:12px;top:176px" width="14" height="10"><circle cx="4" cy="2.4" r="2.3" fill="#1f4a8a"/><path d="M0.3 9.5V7.3C0.3 6.3 1.1 5.5 2.1 5.5H6C7 5.5 7.8 6.3 7.8 7.3V9.5Z" fill="#1f4a8a"/><circle cx="10.8" cy="3" r="1.8" fill="#1f4a8a"/><path d="M8.8 9.5V6.3H12.2C13 6.3 13.5 6.8 13.5 7.6V9.5Z" fill="#1f4a8a"/></svg>
<svg style="left:13px;top:207px" width="12" height="11"><path d="M4.5 8.5L9.8 3.2A1.6 1.6 0 0 0 7.5 1L1.7 6.8A2.5 2.5 0 0 0 5.2 10.3L10.5 5" fill="none" stroke="#3a3a3e" stroke-width="1"/></svg>
<svg style="left:11px;top:238px" width="15" height="11"><path d="M1 5.5L5.5 10 14 1.5" fill="none" stroke="#1f5aa8" stroke-width="3" stroke-linejoin="round"/><path d="M1 5.5L5.5 10" stroke="#173c74" stroke-width="3"/></svg>
<svg style="left:11px;top:268px" width="15" height="14"><path d="M6 1.5L14.5 4V10L6 12.5Z" fill="#28508f"/><path d="M9 3L14.5 7 9 11Z" fill="#3a6ab0"/><rect x="0.5" y="3" width="8" height="8" rx="1" fill="#173c74"/><path d="M2.5 4.8L4.5 7.3 6.5 4.8M4.5 7.3V9.5" stroke="#c8d4e6" stroke-width="1" fill="none"/></svg>
<svg style="left:11px;top:302px" width="15" height="9"><path d="M3.3 8.5C1.5 8.5 0.5 7.5 0.5 6.2 0.5 5 1.4 4 2.8 4 3.3 2 4.9 0.7 7.2 0.7 9.5 0.7 11 2.2 11.4 4 13.3 4 14.5 5 14.5 6.3 14.5 7.6 13.5 8.5 12 8.5Z" fill="#1f5aa8"/></svg>
<svg style="left:12px;top:336px" width="12" height="12"><rect x="0.6" y="5.4" width="5" height="5.6" fill="none" stroke="#3a3a3e" stroke-width="1"/><rect x="5.6" y="5.4" width="5.4" height="5.6" fill="none" stroke="#3a3a3e" stroke-width="1"/><rect x="0.6" y="0.6" width="5" height="4.8" fill="none" stroke="#3a3a3e" stroke-width="1"/><rect x="6.5" y="0.3" width="4" height="4" transform="rotate(45 8.5 2.3)" fill="none" stroke="#3a3a3e" stroke-width="1"/></svg>
<svg style="left:217px;top:167px" width="11" height="8"><rect x="0.5" y="0.5" width="10" height="7" rx="1" fill="none" stroke="#3a3a3e" stroke-width="0.9"/><path d="M6.5 0.5V7.5M2.5 4H5M3.8 2.7L2.5 4 3.8 5.3" fill="none" stroke="#3a3a3e" stroke-width="0.9"/></svg>


<!-- LIST PANE -->
<div class="a" style="left:275.5px;top:170px;font-size:10.3px;line-height:13px;color:#2a2a2c;letter-spacing:0.2px;-webkit-text-stroke:0.4px">Your contacts</div>
<div class="a" style="left:422px;top:170px;font-size:10.3px;line-height:13px;color:#243f69;letter-spacing:0.25px;-webkit-text-stroke:0.4px">By first name</div>
<svg style="left:492px;top:174px" width="8" height="5"><path d="M0.8 0.8L4 4 7.2 0.8" fill="none" stroke="#4a5a70" stroke-width="0.9"/></svg>
<div style="position:absolute;left:238px;top:193px;width:264px;height:1px;background:#878588"></div>
<!-- globe -->
<svg style="left:318px;top:370px" width="60" height="60"><circle cx="29" cy="29" r="25" fill="none" stroke="#5d6678" stroke-width="1.3" stroke-dasharray="14 3 40 3"/><ellipse cx="29" cy="29" rx="20" ry="23" fill="none" stroke="#5d6678" stroke-width="1"/><path d="M9 14H49M9 44H49" stroke="#5d6678" stroke-width="1"/></svg>
<div class="a" style="left:271.5px;top:457px;font-size:14px;line-height:17px;color:#3c3c3f">You haven't added any contacts</div>
<div class="a" style="left:309.5px;top:476px;font-size:14px;line-height:17px;color:#3c3c3f">you</div>
<svg style="left:323.5px;top:517px" width="9" height="9"><path d="M4.5 0V9M0 4.5H9" stroke="#48484e" stroke-width="0.9"/></svg>
<svg style="left:323.5px;top:544.5px" width="9" height="9"><path d="M4.5 0V9M0 4.5H9" stroke="#48484e" stroke-width="0.9"/></svg>
<!-- MODAL -->
<div id="modal">
  <div id="mleft"></div>
  <div class="a" style="left:26px;top:35.5px;font-size:20px;line-height:24px;color:#2b2b2d;letter-spacing:1.05px">Add contact</div>
  <div style="position:absolute;left:26px;top:86.5px;width:195px;font-size:10.4px;line-height:12.3px;color:#404042;letter-spacing:0.12px;white-space:normal">You can add more information than<br>what you see here, such as address<br>and birthday. Select <b style="color:#1f1f21">Add more</b> to<br>bring up more options.</div>
  <!-- illustration -->
  <svg style="left:40px;top:170px" width="150" height="95" viewBox="0 0 150 95">
    <g fill="none" stroke="#739ccb" stroke-width="1.05" stroke-linecap="round">
      <path d="M47.5 54.6 Q41.5 52.3 42.6 46.4 Q37.6 42.4 40.7 37.1 Q37.4 32.0 42.1 27.8 Q40.6 22.0 46.5 19.4 Q47.2 13.4 53.7 12.7 Q56.3 7.2 62.7 8.3 Q67.1 3.9 72.8 6.8 Q78.5 3.9 82.8 8.3 Q89.2 7.2 91.9 12.7 Q98.4 13.4 99.0 19.4 Q104.9 22.0 103.5 27.8 Q108.2 32.0 104.8 37.1 Q107.9 42.4 103.0 46.4 Q104.1 52.3 98.1 54.6"/>
      <path d="M54.4 36.7 Q52.6 33.2 57.3 31.1 Q58.4 27.5 64.0 27.1 Q67.6 24.2 72.8 25.7 Q78.0 24.2 81.5 27.1 Q87.2 27.5 88.2 31.1 Q92.9 33.2 91.2 36.7"/>
      <path d="M54.7 36.8 C54.3 52.3 61.1 62.1 72.8 62.1 C84.4 62.1 91.2 52.3 90.9 36.8"/>
      <path d="M54.7 39.7 C48.5 37.7 48.5 47.5 55.3 46.5 M90.9 39.7 C97.1 37.7 97.1 47.5 90.3 46.5"/>
      <path d="M59.2 40.7 Q62.1 37.7 65.0 40.7 M80.2 40.7 Q83.1 37.7 86.0 40.7"/>
      <path d="M70.4 43.6 Q72.4 44.9 74.7 43.6"/>
      <path d="M66.6 51.9 Q72.8 56.2 79.0 51.9"/>
      <path d="M60.7 59.1 V67.9 C62.1 73.7 83.5 73.7 84.8 67.9 V59.1"/>
      <path d="M60.7 64.0 H49.4 C41.7 64.0 37.4 69.8 37.4 75.7 V80.5 M84.8 64.0 H96.1 C103.9 64.0 107.8 69.8 107.8 75.7 V80.5"/>
      <path d="M2.8 80.9 H18.3 M26.1 80.9 H50.4 M62.1 80.9 H117.5 M123.3 80.9 H147.6 M19.3 70.4 H24.2 M29.0 70.4 H35.8 M106.8 70.4 H119.4"/>
    </g>
  </svg>
  <!-- avatar -->
  <div style="position:absolute;left:269px;top:28.5px;width:72px;height:69px;border-radius:50%;background:#e4e3e6"></div>
  <svg style="left:291.5px;top:51px" width="24" height="24"><circle cx="12" cy="7.3" r="5.7" fill="none" stroke="#fafafa" stroke-width="1.6"/><path d="M1.5 23C2.5 17 6.5 14.5 12 14.5S21.5 17 22.5 23" fill="none" stroke="#fafafa" stroke-width="1.6"/></svg>
  <div style="position:absolute;left:253px;top:49.5px;width:26px;height:25px;border-radius:50%;background:#6e6d70;border:1.5px solid #fdfdfd"></div>
  <svg style="left:259px;top:56.5px" width="14" height="11"><path d="M0.7 2.7H3.8L4.8 0.8H9.2L10.2 2.7H13.3V10.3H0.7Z" fill="none" stroke="#e8e8ea" stroke-width="1"/><circle cx="7" cy="6.3" r="2.2" fill="none" stroke="#e8e8ea" stroke-width="1"/></svg>
  <!-- close -->
  <svg style="left:592.5px;top:7.5px" width="10" height="10"><path d="M0.5 0.5L9.5 9.5M9.5 0.5L0.5 9.5" stroke="#6a6a6c" stroke-width="1"/></svg>
  <!-- fields -->
  <div class="a lbl" style="left:360.5px;top:32.5px">First name</div>
  <div class="a val" style="left:360.5px;top:44px">Admin</div>
  <div style="position:absolute;left:360.5px;top:60px;width:213px;height:1px;background:#8f8f91"></div>
  <div class="a lbl" style="left:360.5px;top:68px">Surname</div>
  <div class="a val" style="left:360.5px;top:79.8px">Videos</div>
  <div style="position:absolute;left:360.5px;top:95.5px;width:213px;height:1px;background:#8f8f91"></div>
  <div class="a lbl" style="left:360.5px;top:103.5px">Nickname</div>
  <div style="position:absolute;left:360.5px;top:115px;width:1px;height:12px;background:#555"></div>
  <div style="position:absolute;left:360.5px;top:130.5px;width:213px;height:2px;background:#3a6ea8"></div>
  <div class="a" style="left:267.5px;top:150.5px;font-size:13px;line-height:16px;color:#2f2f31;letter-spacing:0.62px;-webkit-text-stroke:0.55px">Contact information</div>
  <div class="a lbl" style="left:267.5px;top:172.5px">Email address</div>
  <div class="a val" style="left:267.5px;top:184px;font-size:10.6px">admin@computersciencevideos.com</div>
  <div style="position:absolute;left:267.5px;top:199.5px;width:305px;height:1px;background:#8f8f91"></div>
  <div class="a" style="left:267.5px;top:219px;font-size:13px;line-height:16px;color:#2f2f31;letter-spacing:0.6px;-webkit-text-stroke:0.55px">Notes</div>
  <div style="position:absolute;left:267.5px;top:242px;width:305px;height:56px;border:1px solid #8f8f91;border-radius:2px"></div>
  <div class="a" style="left:275px;top:247px;font-size:10.5px;line-height:13px;color:#7a7a7c">Add notes</div>
  <div style="position:absolute;left:229px;top:326px;width:381px;height:1px;background:#f5f5f6"></div>
  <div style="position:absolute;left:266.8px;top:338.8px;width:59.5px;height:20px;background:#1565bd"></div>
  <div class="a" style="left:266.8px;top:342.5px;width:59.5px;text-align:center;font-size:10px;line-height:13px;color:#f4f8fc;letter-spacing:0.3px;-webkit-text-stroke:0.35px">Create</div>
  <div style="position:absolute;left:338.3px;top:338px;width:60px;height:21px;background:#efeff0"></div>
  <div class="a" style="left:338.3px;top:342.5px;width:60px;text-align:center;font-size:10px;line-height:13px;color:#2c2c2e;letter-spacing:0.3px;-webkit-text-stroke:0.4px">Discard</div>
  <svg style="left:413px;top:341.8px" width="12.5" height="11"><path d="M6.2 0V11M0.5 5.5H12" stroke="#3e6d9f" stroke-width="1"/></svg>
  <div class="a" style="left:431.5px;top:341px;font-size:10.6px;line-height:13px;color:#3b6a9c">Add more</div>
  <svg style="left:484px;top:344.5px" width="10" height="6"><path d="M0.8 0.8L5 5 9.2 0.8" fill="none" stroke="#4a76a4" stroke-width="1"/></svg>
</div>
<!-- mouse cursor -->
<svg style="left:763px;top:343px" width="9" height="13"><path d="M0.6 0.6V11L3 8.6 4.8 12.4 6.4 11.6 4.6 8H8Z" fill="#111" stroke="#fff" stroke-width="0.8"/></svg>

</body></html>
